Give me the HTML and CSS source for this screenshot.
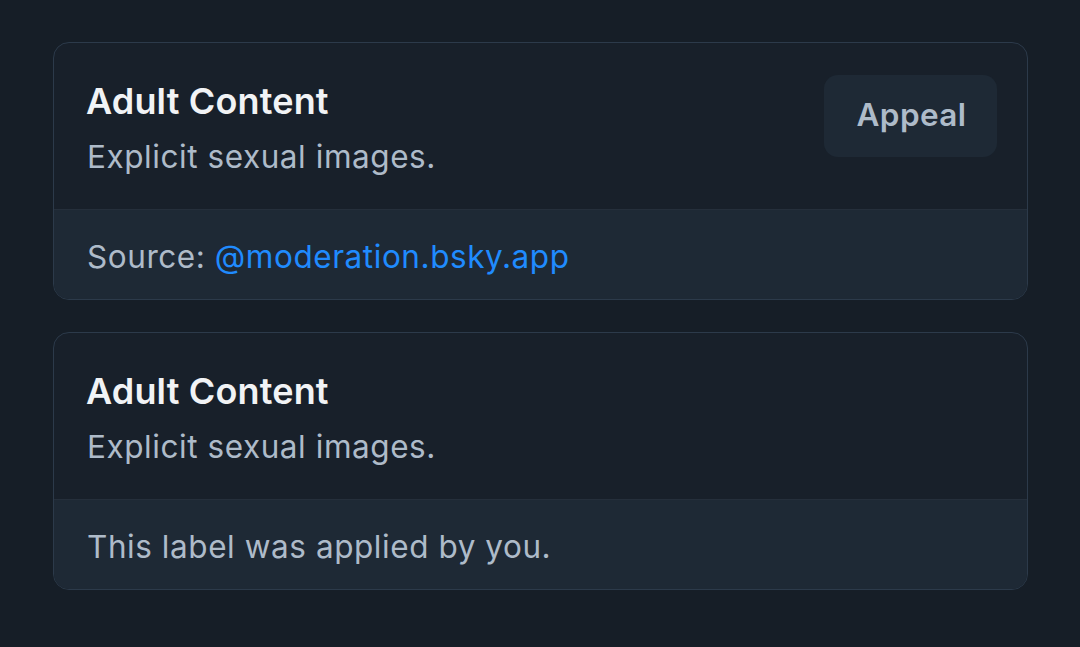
FILE: index.html
```html
<!DOCTYPE html>
<html>
<head>
<meta charset="utf-8">
<link rel="stylesheet" href="styles.css">
</head>
<body>
<div class="list">
  <div class="card">
    <div class="card-top">
      <div class="info">
        <div class="title">Adult Content</div>
        <div class="desc">Explicit sexual images.</div>
      </div>
      <button class="appeal">Appeal</button>
    </div>
    <div class="card-foot">Source:&nbsp;<span class="link">@moderation.bsky.app</span></div>
  </div>
  <div class="card">
    <div class="card-top">
      <div class="info">
        <div class="title">Adult Content</div>
        <div class="desc">Explicit sexual images.</div>
      </div>
    </div>
    <div class="card-foot">This label was applied by you.</div>
  </div>
</div>
</body>
</html>
```
FILE: styles.css
```css
html, body {
  margin: 0;
  padding: 0;
  background: #161e27;
  font-family: Inter, "Noto Sans", sans-serif;
}
.list {
  display: flex;
  flex-direction: column;
  gap: 32px;
  padding: 42px 52px 0 53px;
}
.card {
  border: 1px solid #2c3a4a;
  border-radius: 16px;
  overflow: hidden;
  background: #18202a;
}
.card-top {
  display: flex;
  justify-content: space-between;
  align-items: flex-start;
  height: 167px;
  box-sizing: border-box;
  padding: 36px 30px 0 33px;
  border-bottom: 1px solid #252f3b;
}
.info {
  display: flex;
  flex-direction: column;
}
.title {
  font-size: 36px;
  font-weight: 600;
  color: #f1f3f5;
  line-height: 44px;
  letter-spacing: 0.15px;
  margin-left: -1px;
}
.desc {
  font-size: 31.5px;
  color: #aebbc9;
  line-height: 40px;
  margin-top: 14px;
  letter-spacing: 0.56px;
}
.appeal {
  font-family: Inter, "Noto Sans", sans-serif;
  background: #1e2935;
  border: none;
  border-radius: 14px;
  color: #aebbc9;
  font-size: 31.5px;
  font-weight: 600;
  letter-spacing: 0.4px;
  width: 173px;
  height: 82px;
  margin-top: -4px;
  padding: 0 0 3px 2px;
}
.card-foot {
  background: #1e2935;
  height: 89px;
  box-sizing: border-box;
  padding: 3px 33px 0 33px;
  display: flex;
  align-items: center;
  font-size: 31.5px;
  letter-spacing: 0.56px;
  color: #aebbc9;
}
.link {
  color: #208bfe;
}
```
